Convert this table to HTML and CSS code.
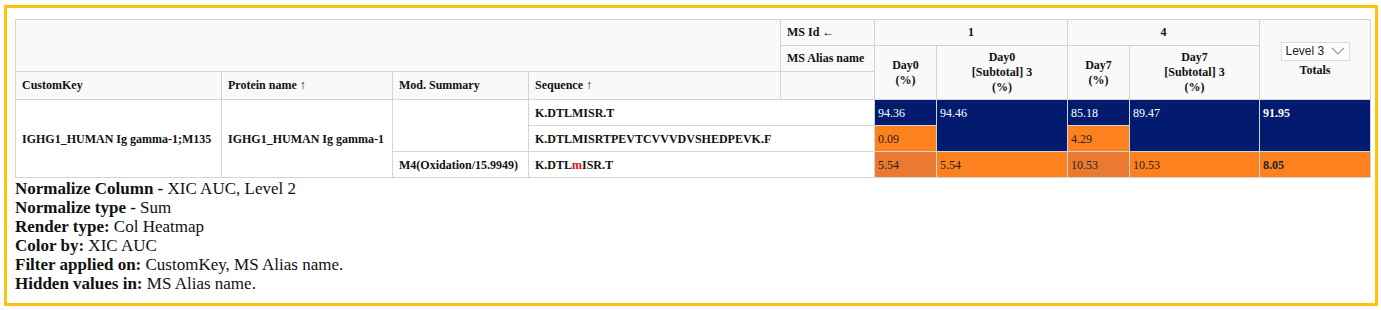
FILE: index.html
```html
<!DOCTYPE html>
<html>
<head>
<meta charset="utf-8">
<link rel="stylesheet" href="styles.css">
</head>
<body>
<div class="frame">
  <table class="grid">
    <colgroup>
      <col style="width:206px"><col style="width:171px"><col style="width:136px"><col style="width:252px"><col style="width:94px"><col style="width:62px"><col style="width:131px"><col style="width:62px"><col style="width:130px"><col style="width:111px">
    </colgroup>
    <thead>
      <tr class="h1">
        <th colspan="4" rowspan="2" class="blank"></th>
        <th class="left">MS Id ←</th>
        <th colspan="2">1</th>
        <th colspan="2">4</th>
        <th rowspan="3" class="totals">
          <div class="select"><span>Level 3</span><svg width="14" height="8" viewBox="0 0 14 8"><path d="M1 1 L7 7 L13 1" fill="none" stroke="#999" stroke-width="1.2"/></svg></div>
          <div>Totals</div>
        </th>
      </tr>
      <tr class="h2">
        <th class="left">MS Alias name</th>
        <th rowspan="2">Day0<br>(%)</th>
        <th rowspan="2">Day0<br>[Subtotal] 3<br>(%)</th>
        <th rowspan="2">Day7<br>(%)</th>
        <th rowspan="2">Day7<br>[Subtotal] 3<br>(%)</th>
      </tr>
      <tr class="h3">
        <th class="left">CustomKey</th>
        <th class="left">Protein name ↑</th>
        <th class="left">Mod. Summary</th>
        <th class="left">Sequence ↑</th>
        <th class="left"></th>
      </tr>
    </thead>
    <tbody>
      <tr>
        <td rowspan="3" class="key">IGHG1_HUMAN Ig gamma-1;M135</td>
        <td rowspan="3" class="key">IGHG1_HUMAN Ig gamma-1</td>
        <td rowspan="2" class="key"></td>
        <td colspan="2" class="seq">K.DTLMISR.T</td>
        <td class="v navy">94.36</td>
        <td rowspan="2" class="v navy">94.46</td>
        <td class="v navy">85.18</td>
        <td rowspan="2" class="v navy">89.47</td>
        <td rowspan="2" class="v navy b">91.95</td>
      </tr>
      <tr>
        <td colspan="2" class="seq">K.DTLMISRTPEVTCVVVDVSHEDPEVK.F</td>
        <td class="v orange">0.09</td>
        <td class="v orange">4.29</td>
      </tr>
      <tr>
        <td class="key mod">M4(Oxidation/15.9949)</td>
        <td colspan="2" class="seq">K.DTL<span class="red">m</span>ISR.T</td>
        <td class="v dark">5.54</td>
        <td class="v orange">5.54</td>
        <td class="v dark">10.53</td>
        <td class="v orange">10.53</td>
        <td class="v orange b">8.05</td>
      </tr>
    </tbody>
  </table>
  <div class="notes">
    <div><b>Normalize Column -</b> XIC AUC, Level 2</div>
    <div><b>Normalize type -</b> Sum</div>
    <div><b>Render type:</b> Col Heatmap</div>
    <div><b>Color by:</b> XIC AUC</div>
    <div><b>Filter applied on:</b> CustomKey, MS Alias name.</div>
    <div><b>Hidden values in:</b> MS Alias name.</div>
  </div>
</div>
</body>
</html>
```
FILE: styles.css
```css
html, body {
  margin: 0;
  padding: 0;
  background: #ffffff;
}
body {
  font-family: "Liberation Serif", "Times New Roman", serif;
  color: #111;
}
.frame {
  margin: 5px 0 0 4px;
  width: 1360px;
  height: 284px;
  border: 3px solid #ffc20e;
  padding: 11px 0 0 8px;
  box-sizing: content-box;
}
.grid {
  border-collapse: collapse;
  table-layout: fixed;
  width: 1355px;
  font-size: 12px;
}
.grid th, .grid td {
  border: 1px solid #d4d4d4;
  padding: 0 6px;
  overflow: hidden;
}
.grid th {
  background: #f9f9f9;
  font-weight: bold;
  text-align: center;
  line-height: 15px;
}
.grid th.left {
  text-align: left;
}
.h1 th { height: 25px; }
.h2 th { height: 25px; }
.h3 th { height: 27px; }
.totals { vertical-align: middle; }
.select {
  display: inline-flex;
  align-items: center;
  justify-content: space-between;
  width: 67px;
  height: 17px;
  border: 1px solid #dcdcdc;
  background: #fff;
  font-family: "Liberation Sans", Arial, sans-serif;
  font-weight: normal;
  font-size: 12px;
  color: #222;
  margin-bottom: 2px;
}
.select span { padding-left: 4px; }
.select svg { margin-right: 4px; }
.grid td {
  padding-top: 6px;
  padding-bottom: 5px;
  line-height: 14px;
  background: #fff;
  font-weight: bold;
}
.grid td.key {
  vertical-align: middle;
  padding-top: 0;
  padding-bottom: 0;
}
.grid td.seq {
  vertical-align: top;
}
.grid td.v {
  vertical-align: top;
  font-weight: normal;
  padding-left: 3px;
}
.grid td.b { font-weight: bold; }
.navy { background: #021b6f !important; color: #fff; }
.orange { background: #fe8120 !important; color: #222; }
.dark { background: #ea7a2f !important; color: #222; }
.red { color: #e01010; }
.notes {
  font-size: 17px;
  line-height: 19px;
  margin-top: 1px;
}
```
